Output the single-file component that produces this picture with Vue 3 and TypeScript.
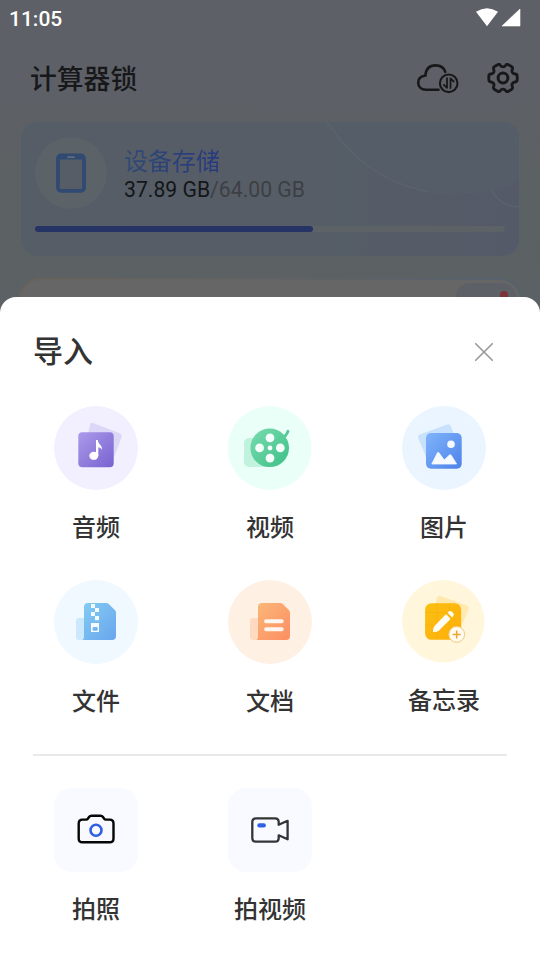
<script setup lang="ts">
interface ImportItem {
  id: string
  label: string
}

const sources: ImportItem[] = [
  { id: 'audio', label: '音频' },
  { id: 'video', label: '视频' },
  { id: 'image', label: '图片' },
  { id: 'file', label: '文件' },
  { id: 'doc', label: '文档' },
  { id: 'memo', label: '备忘录' },
]

const captures: ImportItem[] = [
  { id: 'photo', label: '拍照' },
  { id: 'record', label: '拍视频' },
]

const used = 37.89
const total = 64
const usedPercent = (used / total) * 100
</script>

<template>
  <div class="screen">
    <div class="page">
      <div class="status">
        <span class="clock">11:05</span>
        <svg class="signals" width="46" height="20" viewBox="0 0 46 20">
          <path d="M1 3.8Q12-3.5 23 3.8L12 18.2Z" fill="#fff" />
          <path d="M45 1V18H27Z" fill="#fff" stroke="#fff" stroke-width=".6" stroke-linejoin="round" />
        </svg>
      </div>

      <header class="topbar">
        <h1>计算器锁</h1>
        <div class="actions">
          <svg width="44" height="32" viewBox="0 0 44 32" fill="none" stroke="#17181a" stroke-width="2.6" stroke-linecap="round">
            <path d="M22.5 27.8H10C5 27.8 2.2 24.5 2.2 20.6 2.2 16.3 5.5 14 9.4 13.5 10 6.5 14.2 3.4 19.5 3.4c4.6 0 8.4 2.3 9.8 6.4" />
            <circle cx="32.7" cy="21.3" r="8.8" stroke-width="2.1" />
            <path d="M31 16.2v9.6l-3.1-3M34.5 26.1V16.5l3.2 3" stroke-width="1.8" stroke-linejoin="round" />
          </svg>
          <svg width="34" height="32" viewBox="0 0 34 32" fill="none" stroke="#17181a" stroke-width="2.8" stroke-linejoin="round">
            <path d="M11.6 2.7C12.8 2 13.9 2.5 14.4 3.4 15.6 5.3 18.4 5.3 19.6 3.4 20.1 2.5 21.2 2 22.4 2.7L25.4 4.5C26.6 5.2 26.8 6.4 26.3 7.5 25.3 9.6 26.7 11.8 29 12 30.3 12.1 31.2 12.9 31.2 14.2V17.8C31.2 19.1 30.3 19.9 29 20 26.7 20.2 25.3 22.4 26.3 24.5 26.8 25.6 26.6 26.8 25.4 27.5L22.4 29.3C21.2 30 20.1 29.5 19.6 28.6 18.4 26.7 15.6 26.7 14.4 28.6 13.9 29.5 12.8 30 11.6 29.3L8.6 27.5C7.4 26.8 7.2 25.6 7.7 24.5 8.7 22.4 7.3 20.2 5 20 3.7 19.9 2.8 19.1 2.8 17.8V14.2C2.8 12.9 3.7 12.1 5 12 7.3 11.8 8.7 9.6 7.7 7.5 7.2 6.4 7.4 5.2 8.6 4.5Z" />
            <circle cx="17" cy="16" r="4.9" stroke-width="3" />
          </svg>
        </div>
      </header>

      <section class="storage">
        <svg class="waves" width="500" height="134" viewBox="0 0 500 134" fill="none">
          <path d="M306 0C330 38 380 73 430 73 455 73 480 69 500 59V0Z" fill="#566069" fill-opacity=".5" />
          <path d="M306 0C330 36 360 60 407 70" stroke="#5b636b" stroke-width="1.5" />
          <path d="M470 67C476 80 486 85 500 85" stroke="#5b636d" stroke-width="1.5" />
        </svg>
        <div class="summary">
          <div class="device">
            <svg width="32" height="40" viewBox="0 0 32 40">
              <rect x="3" y="2.4" width="26" height="35.4" rx="3" fill="#575d66" stroke="#304a72" stroke-width="3.8" />
              <path d="M3 4.2H29" stroke="#304a72" stroke-width="4.8" />
              <path d="M13 4.2H19" stroke="#626c79" stroke-width="1.8" stroke-linecap="round" />
            </svg>
          </div>
          <div class="details">
            <div class="name">设备存储</div>
            <div class="amount"><b>{{ used.toFixed(2) }} GB</b>/{{ total.toFixed(2) }} GB</div>
          </div>
        </div>
        <div class="track"><div class="fill" :style="{ width: usedPercent + '%' }"></div></div>
      </section>

      <section class="next-card">
        <div class="next-body"><div class="chip"><i></i></div></div>
      </section>
    </div>

    <main class="sheet">
      <div class="sheet-head">
        <h2>导入</h2>
        <svg width="20" height="20" viewBox="0 0 20 20" stroke="#999" stroke-width="1.6" stroke-linecap="round">
          <path d="M1.7 1.7 18.3 18.3M18.3 1.7 1.7 18.3" />
        </svg>
      </div>

      <div class="grid">
        <div v-for="item in sources" :key="item.id" class="item" :class="item.id">
          <svg v-if="item.id === 'audio'" class="icon" viewBox="0 0 84 84">
            <defs><linearGradient id="ga" x1="0" y1="0" x2="1" y2="1"><stop stop-color="#ab9bea" /><stop offset="1" stop-color="#7762d0" /></linearGradient></defs>
            <circle cx="42" cy="42" r="42" fill="#f2efff" />
            <path d="M39.5 17.2 65 27Q68.8 28.5 67.3 32L58 56.5 30 46 36 19Q37 16 39.5 17.2Z" fill="#dcd6f7" />
            <rect x="24.3" y="26.3" width="35.4" height="35" rx="4" fill="url(#ga)" />
            <ellipse cx="39.8" cy="49.8" rx="4.5" ry="4" fill="#fff" />
            <path d="M42 34H43.8C44 38.2 48.5 39 48 43.8 47 42.2 45.8 41.4 44.3 41.2V50H42Z" fill="#fff" />
          </svg>
          <svg v-else-if="item.id === 'video'" class="icon" viewBox="0 0 84 84">
            <defs><linearGradient id="gv" x1="0" y1="0" x2="1" y2="1"><stop stop-color="#79dcb0" /><stop offset="1" stop-color="#3dbf86" /></linearGradient></defs>
            <circle cx="41.7" cy="42" r="42" fill="#eafff8" />
            <rect x="16" y="32" width="28" height="29" rx="5" fill="#c0f2dd" />
            <path d="M54.5 31.5Q58 30.5 60 25.2" fill="none" stroke="#55c796" stroke-width="2.8" stroke-linecap="round" />
            <circle cx="41.7" cy="41.8" r="19.3" fill="url(#gv)" />
            <g fill="#f4fffb"><circle cx="42" cy="31.9" r="4.4" /><circle cx="31.6" cy="41.9" r="4.4" /><circle cx="52.3" cy="41.9" r="4.4" /><circle cx="42" cy="52.1" r="4.4" /><circle cx="42" cy="42" r="2.4" /></g>
          </svg>
          <svg v-else-if="item.id === 'image'" class="icon" viewBox="0 0 84 84">
            <defs><linearGradient id="gi" x1="0" y1="0" x2="1" y2="1"><stop stop-color="#80b4fb" /><stop offset="1" stop-color="#4d82ea" /></linearGradient></defs>
            <circle cx="42" cy="42" r="42" fill="#ebf5ff" />
            <path d="M19 28 44.5 18.7Q47.8 17.5 49 20.5L54 34 26 56 16.3 32Q15.2 29.2 19 28Z" fill="#c8e1fd" />
            <rect x="24" y="27" width="35.7" height="35.7" rx="5" fill="url(#gi)" />
            <circle cx="49" cy="38.2" r="3.8" fill="#f4faff" />
            <path d="M29.8 58 35.3 47Q36.2 45.6 37.1 47L42.2 54 47.4 49.1Q48.4 48.2 49.2 49.3L54.6 58Z" fill="#f4faff" stroke="#f4faff" stroke-width=".8" stroke-linejoin="round" />
          </svg>
          <svg v-else-if="item.id === 'file'" class="icon" viewBox="0 0 84 84">
            <defs><linearGradient id="gf" x1="0" y1="0" x2="1" y2="1"><stop stop-color="#83cdf3" /><stop offset="1" stop-color="#6aa5ed" /></linearGradient></defs>
            <circle cx="42" cy="42" r="42" fill="#eff9ff" />
            <path d="M25 38H31V60H25Q22 60 22 57V41Q22 38 25 38Z" fill="#cce8fc" />
            <path d="M34 23H52Q53.8 23 55 24.2L60.8 30Q62 31.2 62 33V56Q62 60 58 60H28Q30 60 30 56V27Q30 23 34 23Z" fill="url(#gf)" />
            <path d="M37 24h4v4h4v4h-4v4h4v4.3h-4V36h-4v-4h4v-4h-4ZM37 43h8v9h-8Z" fill="#f5fcff" />
            <rect x="38.6" y="47" width="5.2" height="3.8" rx="1.4" fill="#75b5ee" />
          </svg>
          <svg v-else-if="item.id === 'doc'" class="icon" viewBox="0 0 84 84">
            <defs><linearGradient id="gd" x1="0" y1="0" x2="1" y2="1"><stop stop-color="#fbb878" /><stop offset="1" stop-color="#fc8e62" /></linearGradient></defs>
            <circle cx="42" cy="42" r="42" fill="#fff0e4" />
            <path d="M25 38H31V60H25Q22 60 22 57V41Q22 38 25 38Z" fill="#ffd9c0" />
            <path d="M34 23H52Q53.8 23 55 24.2L60.8 30Q62 31.2 62 33V56Q62 60 58 60H28Q30 60 30 56V27Q30 23 34 23Z" fill="url(#gd)" />
            <path d="M38.1 41.2H53.7M38.1 49.3H53.7" stroke="#fff6ef" stroke-width="4" stroke-linecap="round" />
          </svg>
          <svg v-else class="icon" viewBox="0 0 84 84">
            <defs><linearGradient id="gm" x1="0" y1="0" x2="1" y2="1"><stop stop-color="#fbc013" /><stop offset="1" stop-color="#ffae08" /></linearGradient></defs>
            <circle cx="41.2" cy="41.3" r="41.2" fill="#fff6db" />
            <path d="M38.5 16 64.5 25.3Q67.5 26.4 66.3 29.3L58 50 32 35 34.7 18.5Q35.7 15 38.5 16Z" fill="#ffe9af" />
            <rect x="23.1" y="23.2" width="36" height="36.6" rx="6.5" fill="url(#gm)" />
            <path d="M35 23V59M47.5 23V59M23 32.5H59M23 45H59" stroke="#efaa0a" stroke-width=".6" opacity=".6" />
            <path d="M31 52Q30.8 48.5 32.5 46L43.3 34.8Q44.2 34.3 45 35L48 38.2Q48.5 39 47.8 39.8L37 50.5Q34.5 52.3 31 52Z" fill="#fffdf6" />
            <path d="M45.5 32.5 47 31.2Q48.6 30.4 50 31.7L51.3 33.2Q52.2 34.7 51.3 36.1L50 37.5Z" fill="#fffdf6" />
            <circle cx="54.7" cy="54.4" r="7.9" fill="#fffcf1" stroke="#f6c879" stroke-width="1" />
            <path d="M54.7 50.4V58.4M50.7 54.4H58.7" stroke="#efa42f" stroke-width="1.5" />
          </svg>
          <span>{{ item.label }}</span>
        </div>
      </div>

      <div class="divider"></div>

      <div class="grid">
        <div v-for="item in captures" :key="item.id" class="item">
          <svg class="icon" viewBox="0 0 84 84" fill="none">
            <rect width="84" height="84" rx="18" fill="#f8faff" />
            <template v-if="item.id === 'photo'">
              <path d="M28.5 31.6H32Q33.3 31.6 34 30.5L35.2 28.8Q36 27.7 37.3 27.7H46.7Q48 27.7 48.8 28.8L50 30.5Q50.7 31.6 52 31.6H55.7Q59.5 31.6 59.5 35.4V50.5Q59.5 54.3 55.7 54.3H28.5Q24.7 54.3 24.7 50.5V35.4Q24.7 31.6 28.5 31.6Z" stroke="#050505" stroke-width="2.4" stroke-linejoin="round" />
              <circle cx="42" cy="42.3" r="5.5" stroke="#2f60e5" stroke-width="2.6" />
            </template>
            <template v-else>
              <path d="M50.7 36.8V34Q50.7 30.3 47 30.3H28Q24.3 30.3 24.3 34V50Q24.3 53.7 28 53.7H47Q50.7 53.7 50.7 50V47.3L59.6 51.2V32.8Z" stroke="#333438" stroke-width="2.3" stroke-linejoin="round" />
              <rect x="29.3" y="35.3" width="8.6" height="4.2" rx="2.1" fill="#2f60e5" />
            </template>
          </svg>
          <span>{{ item.label }}</span>
        </div>
      </div>
    </main>
  </div>
</template>

<style>
body {
  margin: 0;
}
</style>

<style scoped>
.screen {
  width: 540px;
  height: 960px;
  overflow: hidden;
  background: #5d6165;
  font-family: Roboto, 'Noto Sans CJK SC', sans-serif;
}
.page {
  height: 313px;
  overflow: hidden;
  background: linear-gradient(180deg, #5d6066 0%, #5d6066 30%, #5c6163 60%, #5b6164 100%);
}
.status {
  display: flex;
  justify-content: space-between;
  align-items: center;
  box-sizing: border-box;
  height: 36px;
  padding: 0 19px 0 9px;
}
.clock {
  padding-top: 2px;
  color: #fff;
  font-size: 21px;
  font-weight: 500;
}
.topbar {
  display: flex;
  justify-content: space-between;
  align-items: center;
  height: 84px;
  padding: 0 20px 0 30px;
}
h1 {
  margin: 0;
  padding-top: 3px;
  color: #17181a;
  font-size: 26.8px;
  font-weight: 500;
  line-height: 40px;
}
.actions {
  display: flex;
  gap: 26px;
}
.storage {
  position: relative;
  box-sizing: border-box;
  width: 500px;
  height: 136px;
  margin: 1px 20px 0;
  padding: 15px 14px 0;
  border: 1px solid #5c6268;
  border-radius: 18px;
  overflow: hidden;
  background: linear-gradient(90deg, #555d66 0%, #575d67 45%, #555d67 65%, #545a67 100%);
}
.waves {
  position: absolute;
  top: 0;
  left: 0;
}
.summary {
  position: relative;
  display: flex;
  gap: 17px;
}
.device {
  display: flex;
  align-items: center;
  justify-content: center;
  width: 72px;
  height: 72px;
  border-radius: 50%;
  background: #5b6268;
}
.details {
  padding-top: 9px;
}
.name {
  width: 96px;
  background: linear-gradient(90deg, #304a73, #273881);
  background-clip: text;
  color: transparent;
  font-size: 24px;
  line-height: 32px;
}
.amount {
  margin-top: -1px;
  color: #3d4043;
  font-size: 21.2px;
  line-height: 26px;
  white-space: nowrap;
}
.amount b {
  color: #151617;
  font-weight: 400;
}
.track {
  position: relative;
  height: 6px;
  margin-top: 17px;
  border-radius: 3px;
  background: #5d6267;
}
.fill {
  height: 6px;
  border-radius: 3px;
  background: #253365;
}
.next-card {
  height: 60px;
  margin: 21px 18px 0;
  padding: 2px;
  border-radius: 22px;
  background: linear-gradient(90deg, #686359, #656462 30%, #5f6265 60%, #56616e);
}
.next-body {
  display: flex;
  justify-content: flex-end;
  height: 60px;
  border-radius: 20px;
  background: #666;
}
.chip {
  display: flex;
  justify-content: flex-end;
  box-sizing: border-box;
  width: 60px;
  height: 40px;
  margin: 3px 4px 0 0;
  padding: 8px 8px 0 0;
  border-radius: 14px;
  background: #5d6167;
}
.chip i {
  width: 8px;
  height: 8px;
  border-radius: 50%;
  background: #7d3035;
}
.sheet {
  position: relative;
  box-sizing: border-box;
  height: 663px;
  margin-top: -16px;
  border-radius: 16px 16px 0 0;
  background: #fff;
}
.sheet-head {
  display: flex;
  align-items: center;
  justify-content: space-between;
  height: 109px;
  padding: 0 46px 0 33px;
}
h2 {
  margin: 0;
  padding-bottom: 5px;
  color: #333;
  font-size: 30px;
  font-weight: 500;
}
.grid {
  display: grid;
  grid-template-columns: repeat(3, 174px);
  row-gap: 34px;
  padding: 0 9px;
}
.item {
  display: flex;
  flex-direction: column;
  align-items: center;
  gap: 20px;
}
.icon {
  display: block;
  width: 84px;
  height: 84px;
}
.item span {
  color: #333;
  font-size: 24px;
  font-weight: 500;
  line-height: 36px;
}
.item.memo {
  gap: 19px;
}
.divider {
  height: 2px;
  margin: 34px 33px 32px;
  background: #e9e9e9;
}
</style>
